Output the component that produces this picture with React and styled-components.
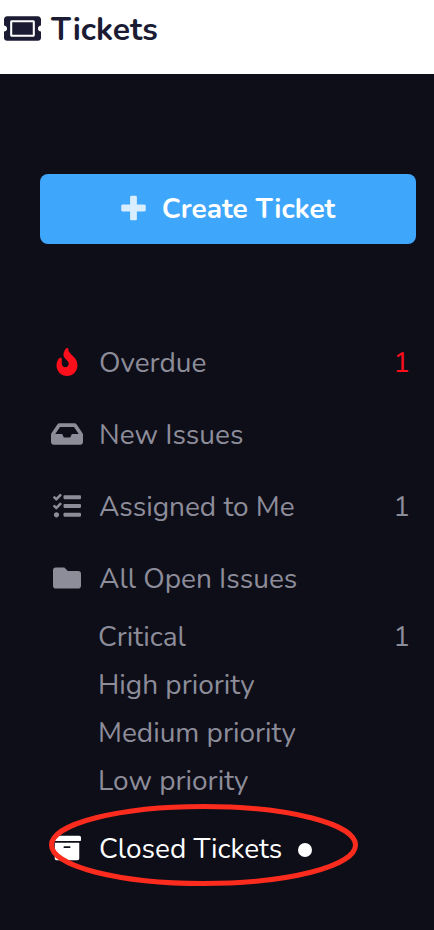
import React from 'react';
import { FaArchive, FaFire, FaFolder, FaInbox, FaTicketAlt } from 'react-icons/fa';
import { createGlobalStyle, styled } from 'styled-components';

const PRIORITIES = [
  { label: 'Critical', count: 1 },
  { label: 'High priority' },
  { label: 'Medium priority' },
  { label: 'Low priority' },
];

function PlusIcon() {
  return (
    <svg viewBox="0 0 448 512" width="25" height="28" fill="currentColor" aria-hidden="true">
      <path d="M448 294v-76c0-13-11-24-24-24H286V56c0-13-11-24-24-24h-76c-13 0-24 11-24 24v138H24c-13 0-24 11-24 24v76c0 13 11 24 24 24h138v138c0 13 11 24 24 24h76c13 0 24-11 24-24V318h138c13 0 24-11 24-24z" />
    </svg>
  );
}

function ChecklistIcon() {
  return (
    <svg viewBox="0 0 512 512" width="28" height="28" fill="currentColor" aria-hidden="true">
      <path d="M208 132h288c8.8 0 16-7.2 16-16V76c0-8.8-7.2-16-16-16H208c-8.8 0-16 7.2-16 16v40c0 8.8 7.2 16 16 16zm0 160h288c8.8 0 16-7.2 16-16v-40c0-8.8-7.2-16-16-16H208c-8.8 0-16 7.2-16 16v40c0 8.8 7.2 16 16 16zm0 160h288c8.8 0 16-7.2 16-16v-40c0-8.8-7.2-16-16-16H208c-8.8 0-16 7.2-16 16v40c0 8.8 7.2 16 16 16zM64 368c-26.5 0-48.6 21.5-48.6 48s22.1 48 48.6 48 48-21.5 48-48-21.5-48-48-48zm92.5-299l-72.2 72.2-15.6 15.6c-4.7 4.7-12.9 4.7-17.6 0L3.5 109.4c-4.7-4.7-4.7-12.3 0-17l15.7-15.7c4.7-4.7 12.3-4.7 17 0l22.7 22.1 63.7-63.3c4.7-4.7 12.3-4.7 17 0l17 16.5c4.6 4.7 4.6 12.3-.1 17zm0 159.6l-72.2 72.2-15.7 15.7c-4.7 4.7-12.9 4.7-17.6 0L3.5 269c-4.7-4.7-4.7-12.3 0-17l15.7-15.7c4.7-4.7 12.3-4.7 17 0l22.7 22.1 63.7-63.7c4.7-4.7 12.3-4.7 17 0l17 17c4.6 4.6 4.6 12.2-.1 16.9z" />
    </svg>
  );
}

function NavItem({ icon, label, count, urgent, active, children }) {
  return (
    <NavLink href="#" $active={active} aria-current={active ? 'page' : undefined}>
      <IconBox $urgent={urgent}>{icon}</IconBox>
      <Label>{label}</Label>
      {active && <ActiveDot />}
      {count && <Count $urgent={urgent}>{count}</Count>}
      {children}
    </NavLink>
  );
}

function App() {
  return (
    <Page>
      <GlobalStyle />
      <Header>
        <FaTicketAlt size={37} aria-hidden="true" />
        <Title>Tickets</Title>
      </Header>
      <Sidebar>
        <CreateButton type="button">
          <PlusWrap>
            <PlusIcon />
          </PlusWrap>
          Create Ticket
        </CreateButton>
        <nav>
          <NavList>
            <li>
              <NavItem icon={<FaFire size={28} />} label="Overdue" count={1} urgent />
            </li>
            <li>
              <NavItem icon={<FaInbox size={32} />} label="New Issues" />
            </li>
            <li>
              <NavItem icon={<ChecklistIcon />} label="Assigned to Me" count={1} />
            </li>
            <li>
              <NavItem icon={<FaFolder size={28} />} label="All Open Issues" />
              <SubList>
                {PRIORITIES.map(({ label, count }) => (
                  <li key={label}>
                    <SubLink href="#">
                      <Label>{label}</Label>
                      {count && <Count>{count}</Count>}
                    </SubLink>
                  </li>
                ))}
              </SubList>
            </li>
            <li>
              <NavItem icon={<FaArchive size={28} />} label="Closed Tickets" active>
                <Highlight viewBox="0 0 310 84" aria-hidden="true">
                  <ellipse cx="154.5" cy="42" rx="152" ry="38.5" />
                </Highlight>
              </NavItem>
            </li>
          </NavList>
        </nav>
      </Sidebar>
    </Page>
  );
}

export default App;

const GlobalStyle = createGlobalStyle`
  * {
    box-sizing: border-box;
  }
  body {
    margin: 0;
    background-color: #0e0e19;
    font-family: Nunito, Lato, sans-serif;
  }
`;
const Page = styled.div`
  display: flex;
  flex-direction: column;
  min-height: 100vh;
`;
const Header = styled.header`
  display: flex;
  align-items: center;
  gap: 10px;
  padding: 6px 4px 24px;
  background-color: #fff;
  color: #1b1b33;
`;
const Title = styled.h1`
  margin: 0;
  padding-top: 4px;
  font-size: 32px;
  font-weight: 700;
  line-height: 40px;
`;
const Sidebar = styled.aside`
  flex: 1;
  padding: 100px 18px 40px 40px;
  background-color: #0e0e19;
`;
const CreateButton = styled.button`
  display: flex;
  justify-content: center;
  align-items: center;
  gap: 16px;
  width: 100%;
  height: 70px;
  margin-bottom: 98px;
  padding: 0;
  border: none;
  border-radius: 8px;
  background-color: #3ea6fb;
  font-family: inherit;
  font-size: 28px;
  font-weight: 700;
  color: #fff;
  cursor: pointer;
`;
const PlusWrap = styled.span`
  display: flex;
  padding-bottom: 2px;
  opacity: 0.8;
`;
const NavList = styled.ul`
  display: flex;
  flex-direction: column;
  gap: 32px;
  margin: 0;
  padding: 0;
  list-style: none;
`;
const NavLink = styled.a`
  position: relative;
  display: flex;
  align-items: center;
  height: 40px;
  padding: 0 6px 0 11px;
  font-size: 28px;
  line-height: 40px;
  text-decoration: none;
  color: ${({ $active }) => ($active ? '#fff' : '#8d8d9a')};
`;
const IconBox = styled.span`
  display: flex;
  justify-content: center;
  width: 32px;
  margin-right: 16px;
  color: ${({ $urgent }) => ($urgent ? '#ff0f1b' : 'inherit')};
`;
const Label = styled.span`
  padding-top: 2px;
`;
const Count = styled.span`
  margin-left: auto;
  padding-top: 2px;
  color: ${({ $urgent }) => ($urgent ? '#ff0f1b' : 'inherit')};
`;
const SubList = styled.ul`
  margin: 14px 0 -8px;
  padding: 0;
  list-style: none;
`;
const SubLink = styled.a`
  display: flex;
  align-items: center;
  height: 48px;
  padding: 0 6px 0 58px;
  font-size: 28px;
  line-height: 40px;
  text-decoration: none;
  color: #8d8d9a;
`;
const ActiveDot = styled.span`
  width: 14px;
  height: 14px;
  margin: 4px 0 0 16px;
  border-radius: 50%;
  background-color: #fff;
`;
// hand-drawn style ring laid over the active row
const Highlight = styled.svg`
  position: absolute;
  top: -25px;
  left: 9px;
  width: 310px;
  height: 84px;
  fill: none;
  stroke: #fb2b1d;
  stroke-width: 5px;
  pointer-events: none;
`;
